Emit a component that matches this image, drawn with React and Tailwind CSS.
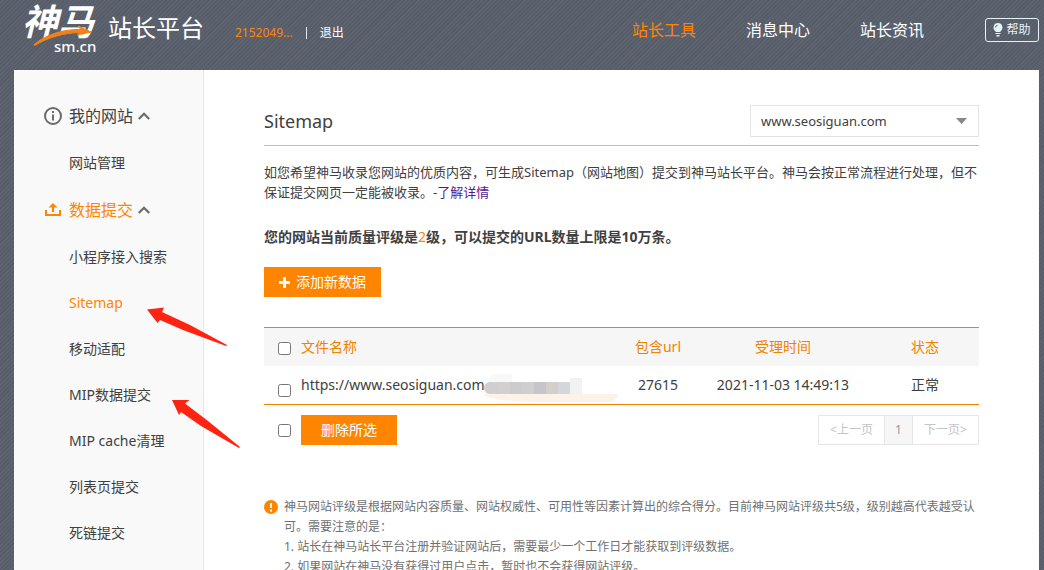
const navItems = [
  { label: "站长工具", active: true },
  { label: "消息中心" },
  { label: "站长资讯" },
];

const submitItems = [
  { label: "小程序接入搜索" },
  { label: "Sitemap", active: true },
  { label: "移动适配" },
  { label: "MIP数据提交" },
  { label: "MIP cache清理" },
  { label: "列表页提交" },
  { label: "死链提交" },
];

const files = [
  {
    url: "https://www.seosiguan.com",
    count: "27615",
    time: "2021-11-03 14:49:13",
    status: "正常",
  },
];

// colours of the censored part of the file name
const mosaic = [
  "bg-[#cfcfd2]",
  "bg-[#d3cfd0]",
  "bg-[#cdcccd]",
  "bg-[#cfcfcf]",
  "bg-[#c4c6cb]",
  "bg-[#d6cecb]",
  "bg-[#d3d6da]",
];

function Logo() {
  return (
    <a href="#" className="relative block h-14 w-[182px] text-white">
      <span className="absolute left-0 top-1 text-4xl leading-9 font-bold italic">神马</span>
      <svg className="absolute left-[10px] top-[25px]" width="70" height="22" viewBox="0 0 70 22">
        <path
          d="M2 19.500C15 9 32 4 49 4.500L46 1L59 7L45 10L48 7.500C32 8 17 12 2.500 20.500Z"
          fill="#f08219"
          stroke="#f08219"
          strokeLinejoin="round"
        />
      </svg>
      <span className="absolute left-8 top-[38px] text-[15px] leading-4 font-medium">sm.cn</span>
      <span className="absolute right-0 top-[14px] text-2xl leading-7">站长平台</span>
    </a>
  );
}

function Chevron() {
  return (
    <svg width="12" height="8" viewBox="0 0 12 8" fill="none" stroke="#6b6b6b" strokeWidth="2.200">
      <path d="M0.800 7L6 1.800L11.200 7" />
    </svg>
  );
}

function InfoIcon() {
  return (
    <svg width="18" height="18" viewBox="0 0 18 18" fill="none" stroke="#6b6b6b" strokeWidth="2">
      <circle cx="9" cy="9" r="8" />
      <path d="M9 7.5V13.5M9 4V6" />
    </svg>
  );
}

function UploadIcon() {
  return (
    <svg width="18" height="18" viewBox="0 0 18 18" fill="none" stroke="#ff8500" strokeWidth="2">
      <path d="M2 9V14H16V9M9 11V4" />
      <path d="M4.500 6.500L9 2L13.500 6.500Z" fill="#ff8500" stroke="none" />
    </svg>
  );
}

function MenuGroup({ icon, title, active, items }) {
  return (
    <div>
      <button
        className={
          active
            ? "flex h-12 w-full items-center pl-[30px] text-base text-[#ff8500]"
            : "flex h-12 w-full items-center pl-[30px] text-base text-[#404040]"
        }
      >
        {icon}
        <span className="ml-[7px] mr-[5px]">{title}</span>
        <Chevron />
      </button>
      <ul>
        {items.map((item) => (
          <li key={item.label} className="flex h-[46px] items-center pl-[55px] text-sm">
            <a href="#" className={item.active ? "text-[#ff8500]" : "text-[#404040]"}>
              {item.label}
            </a>
          </li>
        ))}
      </ul>
    </div>
  );
}

export default function App() {
  return (
    <div
      lang="zh-CN"
      className="relative flex h-screen flex-col overflow-hidden bg-[#5b626e] bg-[repeating-linear-gradient(135deg,#565d69_0px,#565d69_1px,#5d6470_2px,#5d6470_3px)] font-['Noto_Sans','Noto_Sans_CJK_SC',sans-serif] text-[#404040]"
    >
      {/* Header */}
      <header className="flex h-[70px] shrink-0 items-start pl-[22px] pr-[5px] text-white">
        <Logo />
        <div className="ml-[31px] mt-[23px] flex items-center text-xs leading-5">
          <a href="#" className="text-[#ff8500]">2152049...</a>
          <span className="mx-[13px] h-3 w-px bg-[#dfe8ef]" />
          <a href="#">退出</a>
        </div>
        <nav className="ml-auto mr-[61px] mt-[18px] flex gap-[50px] text-base leading-6">
          {navItems.map((item) => (
            <a key={item.label} href="#" className={item.active ? "text-[#ff8500]" : "text-white"}>
              {item.label}
            </a>
          ))}
        </nav>
        <button className="mt-[18px] flex h-6 w-[54px] items-center justify-center gap-[3px] rounded-[3px] border border-[#e4f3fa] text-xs text-[#e4f3fa]">
          <svg width="10" height="14" viewBox="0 0 10 14" fill="#e4f3fa">
            <path d="M5 0A4.500 4.500 0 0 0 2.500 8.200V9H7.500V8.200A4.500 4.500 0 0 0 5 0Z" />
            <path d="M2.500 10H7.500V11H2.500ZM3.500 12H6.500V13.500H3.500Z" />
            <path d="M2.400 4.600A2.600 2.600 0 0 1 4.600 2.200" fill="none" stroke="#5b626e" />
          </svg>
          帮助
        </button>
      </header>

      <div className="ml-[14px] mr-[5px] flex flex-1 bg-white">
        {/* Sidebar */}
        <aside className="w-[190px] shrink-0 border-r border-[#e6e6e6] bg-[#f9f9f9] pt-[22px]">
          <MenuGroup icon={<InfoIcon />} title="我的网站" items={[{ label: "网站管理" }]} />
          <MenuGroup icon={<UploadIcon />} title="数据提交" active items={submitItems} />
        </aside>

        {/* Content */}
        <main className="min-w-0 flex-1 px-[60px] pt-[35px]">
          <div className="flex items-center justify-between border-b border-[#bfbfbf] pb-2">
            <h1 className="text-lg leading-8">Sitemap</h1>
            <div className="relative">
              <select
                aria-label="网站"
                className="block h-8 w-[229px] appearance-none border border-[#e3e3e3] bg-white pl-[10px] pt-px text-[13px]"
              >
                <option>www.seosiguan.com</option>
              </select>
              <svg className="pointer-events-none absolute right-3 top-[13px]" width="11" height="6" viewBox="0 0 11 6">
                <path d="M0 0H11L5.500 6Z" fill="#888" />
              </svg>
            </div>
          </div>

          <p className="mt-4 text-[13px] leading-5">
            如您希望神马收录您网站的优质内容，可生成Sitemap（网站地图）提交到神马站长平台。神马会按正常流程进行处理，但不保证提交网页一定能被收录。
            <a href="#" className="text-[#551a8b]">-了解详情</a>
          </p>

          <p className="mt-[25px] text-sm leading-5 font-bold">
            您的网站当前质量评级是<span className="font-normal text-[#ff8500]">2</span>
            级，可以提交的URL数量上限是10万条。
          </p>

          <button className="mt-5 flex h-[30px] w-[117px] items-center justify-center gap-[6px] bg-[#ff8500] text-sm text-white">
            <svg width="11" height="11" viewBox="0 0 11 11" stroke="#fff" strokeWidth="3">
              <path d="M5.500 0V11M0 5.500H11" />
            </svg>
            添加新数据
          </button>

          <table className="mt-[30px] w-full table-fixed text-sm">
            <colgroup>
              <col className="w-[37px]" />
              <col />
              <col className="w-[74px]" />
              <col className="w-[176px]" />
              <col className="w-[108px]" />
            </colgroup>
            <thead>
              <tr className="h-[38px] border-t border-[#f08200] bg-[#f6f6f6] text-[#f08200]">
                <th className="pl-[14px] pt-[3px]">
                  <input type="checkbox" aria-label="全选" className="block size-[13px]" />
                </th>
                <th className="text-left font-normal">文件名称</th>
                <th className="font-normal">包含url</th>
                <th className="font-normal">受理时间</th>
                <th className="font-normal">状态</th>
              </tr>
            </thead>
            <tbody>
              {files.map((file) => (
                <tr key={file.url} className="h-[39px] border-b border-[#f08200] text-center">
                  <td className="pl-[14px] pt-3">
                    <input type="checkbox" aria-label={file.url} className="block size-[13px]" />
                  </td>
                  <td className="relative text-left">
                    {file.url}
                    <span className="absolute left-[183px] top-2 h-[26px] w-[134px]">
                      <span className="absolute left-1 top-0 h-5 w-6 rounded-tl-lg bg-[#f8f8f8]" />
                      <span className="absolute left-0 top-5 h-2 w-[134px] rounded-br-[12px_8px] rounded-bl-[60px_8px] bg-[#fdf2e6]" />
                      <span className="absolute left-0 top-2 flex h-3">
                        {mosaic.map((color) => (
                          <span key={color} className={`h-3 w-3 first:w-[14px] first:rounded-l-md ${color}`} />
                        ))}
                        <span className="-mt-1 h-4 w-3 bg-[#f2f2f4]" />
                      </span>
                    </span>
                  </td>
                  <td>{file.count}</td>
                  <td>{file.time}</td>
                  <td>{file.status}</td>
                </tr>
              ))}
            </tbody>
          </table>

          <div className="mt-[10px] flex items-center pl-[14px]">
            <input type="checkbox" aria-label="选择全部" className="size-[13px]" />
            <button className="ml-[10px] h-[30px] w-24 bg-[#ff8500] text-sm text-white">删除所选</button>
            <div className="ml-auto flex h-[30px] border border-[#e6e6e6] text-xs text-[#c4c4c4]">
              <button className="w-[65px]">&lt;上一页</button>
              <button className="w-[29px] border-x border-[#e6e6e6] bg-[#f6f6f6] text-[#999]">1</button>
              <button className="w-[65px]">下一页&gt;</button>
            </div>
          </div>

          <div className="mt-[52px] flex gap-[6px] text-xs leading-5 text-[#707070]">
            <svg className="mt-[3px] shrink-0" width="14" height="14" viewBox="0 0 14 14">
              <circle cx="7" cy="7" r="7" fill="#ff8500" />
              <path d="M7 3V8M7 9.500V11.500" stroke="#fff" strokeWidth="2" />
            </svg>
            <div>
              <p>
                神马网站评级是根据网站内容质量、网站权威性、可用性等因素计算出的综合得分。目前神马网站评级共5级，级别越高代表越受认可。需要注意的是：
              </p>
              <p>1. 站长在神马站长平台注册并验证网站后，需要最少一个工作日才能获取到评级数据。</p>
              <p>2. 如果网站在神马没有获得过用户点击，暂时也不会获得网站评级。</p>
            </div>
          </div>
        </main>
      </div>

      {/* Arrows pointing at the menu entries */}
      <svg
        className="pointer-events-none absolute left-[146px] top-[306px]"
        width="96"
        height="144"
        viewBox="146 306 96 144"
        fill="#ff2412"
      >
        <path d="M147 309.500L164 307.500L162 312L190 325L227 345L226 346L183 330L160 320L157.500 323Z" />
        <path d="M172 400L189.500 400L185 403.500L208 421L240 447L239 448L201 426L181 412L179 415Z" />
      </svg>
    </div>
  );
}
